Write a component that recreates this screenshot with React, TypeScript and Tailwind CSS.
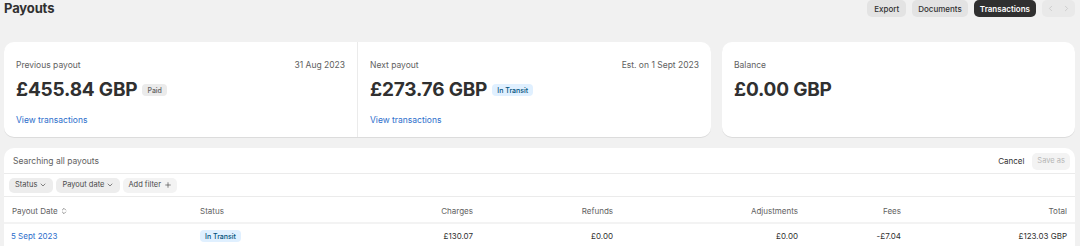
import { ChevronDown, ChevronLeft, ChevronRight, ChevronsUpDown, Plus } from 'lucide-react';

const COLS = 'grid grid-cols-[190px_106px_181px_140px_185px_103px_166px]';

function Badge({ tone, children }: { tone: 'gray' | 'blue'; children: React.ReactNode }) {
  return (
    <span
      className={
        'inline-flex items-center h-[12px] px-[5px] rounded-[4px] text-[7px] font-medium leading-none ' +
        (tone === 'blue' ? 'bg-[#e0f0ff] text-[#00527c]' : 'bg-[#ebebeb] text-[#616161]')
      }
    >
      {children}
    </span>
  );
}

function PayoutCard({
  label,
  meta,
  amount,
  badge,
  link,
}: {
  label: string;
  meta?: string;
  amount: string;
  badge?: React.ReactNode;
  link?: boolean;
}) {
  return (
    <div className="flex-1 flex flex-col px-3 pt-[18px] pb-[11px]">
      <div className="flex justify-between items-center text-[8.5px] leading-[11px] text-[#616161]">
        <span>{label}</span>
        {meta && <span>{meta}</span>}
      </div>
      <div className="flex items-center gap-[5px] mt-[7px]">
        <span className="text-[19px] font-bold leading-[24px] tracking-[-0.01em] text-[#303030]">{amount}</span>
        {badge}
      </div>
      {link && (
        <a className="mt-auto text-[8.5px] leading-[11px] text-[#2c6ecb]" href="#">
          View transactions
        </a>
      )}
    </div>
  );
}

export default function App() {
  return (
    <div className="min-h-screen bg-[#f1f1f1] font-['Inter',sans-serif] text-[#303030]">
      {/* Header */}
      <div className="flex justify-between items-start h-[42px] pl-1 pr-[5px]">
        <h1 className="text-[13px] font-bold leading-[17px] tracking-[-0.01em]">Payouts</h1>
        <div className="flex items-center gap-[6px]">
          <button className="h-[17px] px-[7px] rounded-[5px] bg-[#e3e3e3] text-[8px] font-medium text-[#303030]">
            Export
          </button>
          <button className="h-[17px] px-[6px] rounded-[5px] bg-[#e3e3e3] text-[8px] font-medium text-[#303030]">
            Documents
          </button>
          <button className="h-[17px] px-[6px] rounded-[5px] bg-[#303030] text-[8px] font-semibold text-white">
            Transactions
          </button>
          <div className="flex items-center h-[17px] w-[33px] justify-around rounded-[5px] bg-[#e9e9e9] text-[#c4c4c4]">
            <ChevronLeft size={9} strokeWidth={2} />
            <ChevronRight size={9} strokeWidth={2} />
          </div>
        </div>
      </div>

      {/* Summary cards */}
      <div className="flex gap-[11px] pl-1 pr-[5px]">
        <div className="w-[707px] h-[95px] flex rounded-[10px] bg-white shadow-[0_1px_0_#dcdcdc]">
          <PayoutCard
            label="Previous payout"
            meta="31 Aug 2023"
            amount="£455.84 GBP"
            badge={<Badge tone="gray">Paid</Badge>}
            link
          />
          <div className="w-px bg-[#ebebeb]" />
          <PayoutCard
            label="Next payout"
            meta="Est. on 1 Sept 2023"
            amount="£273.76 GBP"
            badge={<Badge tone="blue">In Transit</Badge>}
            link
          />
        </div>
        <div className="flex-1 h-[95px] flex rounded-[10px] bg-white shadow-[0_1px_0_#dcdcdc]">
          <PayoutCard label="Balance" amount="£0.00 GBP" />
        </div>
      </div>

      {/* Payouts table */}
      <div className="mt-[11px] ml-1 mr-[5px] rounded-t-[10px] bg-white overflow-hidden">
        <div className="flex items-center justify-between h-[26px] pt-[1px] pl-[9px] pr-[5px] border-b border-[#ebebeb]">
          <span className="text-[8.5px] text-[#616161]">Searching all payouts</span>
          <div className="flex items-center gap-[8px]">
            <span className="text-[8px] text-[#303030]">Cancel</span>
            <span className="h-[17px] px-[5px] flex items-center rounded-[5px] bg-[#f3f3f3] text-[7.5px] text-[#b5b5b5]">
              Save as
            </span>
          </div>
        </div>
        <div className="flex items-center gap-[3px] h-[23px] px-[5px] border-b border-[#ebebeb]">
          <span className="flex items-center gap-[2px] h-[15px] px-[6px] rounded-[5px] bg-[#ededed] text-[7.5px] text-[#4a4a4a]">
            Status <ChevronDown size={8} strokeWidth={2} />
          </span>
          <span className="flex items-center gap-[2px] h-[15px] px-[6px] rounded-[5px] bg-[#ededed] text-[7.5px] text-[#4a4a4a]">
            Payout date <ChevronDown size={8} strokeWidth={2} />
          </span>
          <span className="flex items-center gap-[3px] h-[15px] px-[5px] rounded-[5px] bg-[#f3f3f3] text-[7.5px] text-[#4a4a4a]">
            Add filter <Plus size={8} strokeWidth={2} />
          </span>
        </div>
        <div className={COLS + ' h-[27px] pt-[2px] items-center text-[8px] text-[#616161] border-b-2 border-[#f3f3f3]'}>
          <span className="px-2 flex items-center gap-[2px]">
            Payout Date <ChevronsUpDown size={8} strokeWidth={2} />
          </span>
          <span className="pl-[6px]">Status</span>
          <span className="px-2 text-right">Charges</span>
          <span className="px-2 text-right">Refunds</span>
          <span className="px-2 text-right">Adjustments</span>
          <span className="px-2 text-right">Fees</span>
          <span className="px-2 text-right">Total</span>
        </div>
        <div className={COLS + ' h-[24px] items-center text-[8px] text-[#303030]'}>
          <span className="pl-[7px] text-[#2c6ecb]">5 Sept 2023</span>
          <span className="pl-[6px]">
            <Badge tone="blue">In Transit</Badge>
          </span>
          <span className="px-2 text-right">£130.07</span>
          <span className="px-2 text-right">£0.00</span>
          <span className="px-2 text-right">£0.00</span>
          <span className="px-2 text-right">-£7.04</span>
          <span className="px-2 text-right">£123.03 GBP</span>
        </div>
      </div>
    </div>
  );
}
